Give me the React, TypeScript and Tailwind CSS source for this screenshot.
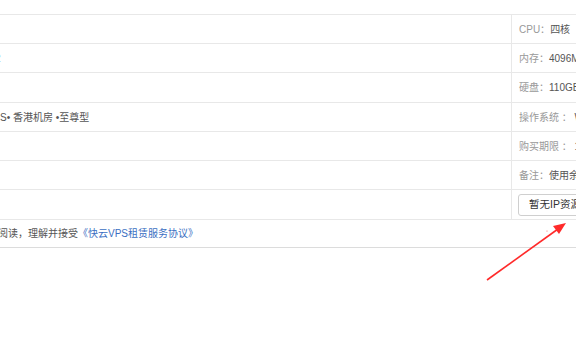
export default function App() {
  const specs = [
    { label: "CPU：", value: "四核", h: "h-[29px]" },
    { label: "内存：", value: "4096M", h: "h-[29px]" },
    { label: "硬盘：", value: "110GB", h: "h-[30px]" },
    { label: "操作系统 ： ", value: "Windows", h: "h-[29px]" },
    { label: "购买期限 ： ", value: "1个月", h: "h-[29px]" },
    { label: "备注：", value: "使用余额支付", h: "h-[29px]" },
  ]

  const leftText = ["", "", "", "S• 香港机房 •至尊型", "", ""]

  return (
    <div className="relative w-[576px] h-[356px] overflow-hidden bg-white font-['Liberation_Sans','Noto_Sans_CJK_SC',sans-serif] text-[10px] text-[#555]">
      <div className="h-[14px]" />
      <div className="flex flex-col">
        {specs.map((s, i) => (
          <div key={s.label} className={`flex ${s.h} border-t border-[#e8e8e8]`}>
            <div className="w-[512px] shrink-0 border-r border-[#e8e8e8] flex items-center whitespace-pre">
              {i === 1 ? (
                <span className="-ml-[5px] text-[#3b7bd4]">2</span>
              ) : (
                leftText[i]
              )}
            </div>
            <div className="flex items-center pl-[7px] whitespace-pre">
              <span className="text-[#999]">{s.label}</span>
              <span className="text-[#555]">{s.value}</span>
            </div>
          </div>
        ))}
        <div className="flex h-[30px] border-t border-[#e8e8e8]">
          <div className="w-[512px] shrink-0 border-r border-[#e8e8e8]" />
          <div className="flex items-center pl-[6px]">
            <button className="h-[22px] px-[10px] border border-[#cfcfcf] rounded-[3px] bg-white text-[#333] whitespace-nowrap text-[10.5px]">
              暂无IP资源可用
            </button>
          </div>
        </div>
        <div className="flex items-center h-[29px] border-t border-b border-[#e8e8e8] border-b-[#dcdcdc] whitespace-nowrap">
          <span className="-ml-[2px]">阅读，理解并接受</span>
          <a className="text-[#3b6fc2]">《快云VPS租赁服务协议》</a>
        </div>
      </div>
      <svg className="absolute left-0 top-0" width="576" height="356" viewBox="0 0 576 356">
        <line x1="487" y1="280" x2="558" y2="229" stroke="#ff2a2a" strokeWidth="1.6" />
        <polygon points="566,223 553,226 559,234" fill="#ff2a2a" />
        <circle cx="547" cy="231" r="0.6" fill="#ff6666" />
      </svg>
    </div>
  )
}
